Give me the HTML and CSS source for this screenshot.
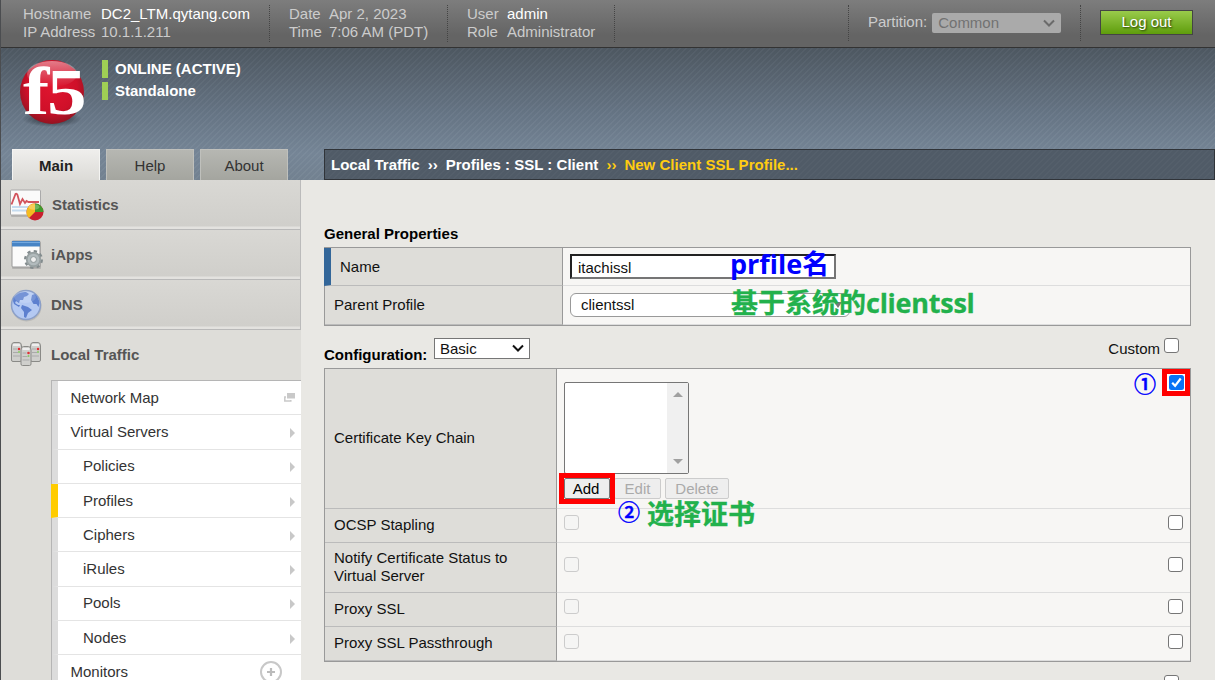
FILE: index.html
```html
<!DOCTYPE html>
<html lang="en">
<head>
<meta charset="utf-8">
<title>New Client SSL Profile</title>
<link rel="stylesheet" href="styles.css">
</head>
<body>
<div class="page">
  <div class="topbar">
    <dl class="info host"><dt>Hostname</dt><dd class="hi">DC2_LTM.qytang.com</dd><dt>IP Address</dt><dd>10.1.1.211</dd></dl>
    <dl class="info date"><dt>Date</dt><dd>Apr 2, 2023</dd><dt>Time</dt><dd>7:06 AM (PDT)</dd></dl>
    <dl class="info user"><dt>User</dt><dd class="hi">admin</dd><dt>Role</dt><dd>Administrator</dd></dl>
    <div class="partition"><span>Partition:</span>
      <span class="part-select">Common<svg width="14" height="9" viewBox="0 0 14 9"><path d="M2 1.500l5 5 5-5" fill="none" stroke="#6b6b6b" stroke-width="2"/></svg></span>
    </div>
    <div class="logout-box"><span class="logout">Log out</span></div>
  </div>

  <header class="header">
    <div class="brand">
      <svg class="logo" width="72" height="72" viewBox="0 0 72 72">
        <defs>
          <radialGradient id="ball" cx="50%" cy="42%" r="60%"><stop offset="0" stop-color="#e0152f"/><stop offset=".65" stop-color="#cf1029"/><stop offset="1" stop-color="#8d1420"/></radialGradient>
          <linearGradient id="gloss" x1="0" y1="0" x2="0" y2="1"><stop offset="0" stop-color="#fff" stop-opacity=".45"/><stop offset="1" stop-color="#fff" stop-opacity="0"/></linearGradient>
          <radialGradient id="shade"><stop offset="0" stop-color="#1c2228" stop-opacity=".9"/><stop offset="1" stop-color="#1c2228" stop-opacity="0"/></radialGradient>
        </defs>
        <ellipse cx="36" cy="60" rx="30" ry="8" fill="url(#shade)"/>
        <circle cx="36" cy="33" r="32" fill="url(#ball)"/>
        <ellipse cx="36" cy="15" rx="25" ry="13" fill="url(#gloss)"/>
        <text class="logo-f" transform="translate(7 55) scale(1.16 1)">f</text>
        <text class="logo-5" transform="translate(31 55) scale(1.22 1)">5</text>
      </svg>
      <div class="status"><div>ONLINE (ACTIVE)</div><div class="alone">Standalone</div></div>
    </div>
    <div class="navrow">
      <nav class="tabs"><span class="tab on">Main</span><span class="tab">Help</span><span class="tab">About</span></nav>
      <div class="crumbs"><span>Local Traffic</span><i>››</i><span>Profiles : SSL : Client</span><i class="now">››</i><span class="now last">New Client SSL Profile...</span></div>
    </div>
  </header>

  <div class="body">
    <aside class="side">
      <div class="sect"><svg width="36" height="36" viewBox="0 0 36 36">
        <rect x="2" y="2" width="30" height="26" rx="1" fill="#888" opacity=".4"/>
        <rect x="1.500" y="1" width="30" height="25" rx="1" fill="#fafafa" stroke="#aaa"/>
        <path d="M3 18h27M3 21.500h27" stroke="#c4dbef" stroke-width="2"/>
        <path d="M2.500 15.500L6.500 5q1-1 2 1l2.500 9 2.500-5 2.500 4 1.500-2 2 1H30" fill="none" stroke="#d2535c" stroke-width="1.800"/>
        <circle cx="26" cy="23" r="8.500" fill="#c81f2e"/><path d="M26 23V14.500A8.500 8.500 0 0 0 20 29z" fill="#f3bd21"/><path d="M26 23V14.500A8.500 8.500 0 0 1 34.500 23z" fill="#3f9b2c"/><ellipse cx="25" cy="18" rx="5.500" ry="2.800" fill="#fff" opacity=".25"/></svg><span>Statistics</span></div>
      <div class="sect iapps"><svg width="36" height="36" viewBox="0 0 36 36">
        <rect x="3" y="3" width="29" height="27" rx="1" fill="#888" opacity=".4"/>
        <rect x="3" y="2" width="28" height="26" rx="1" fill="#fbfbfb" stroke="#999"/><path d="M3 2h28v5.500H3z" fill="#4784c5"/><path d="M3 3.500h28" stroke="#73a8df"/>
        <circle cx="24.500" cy="20.500" r="8.200" fill="none" stroke="#828b8d" stroke-width="2.600" stroke-dasharray="3.220 3.220"/><circle cx="24.500" cy="20.500" r="5" fill="none" stroke="#98a1a2" stroke-width="5.400"/><circle cx="24.500" cy="20.500" r="4.600" fill="none" stroke="#b2bbbd" stroke-width="2.500"/><circle cx="24.500" cy="20.500" r="2" fill="#eee"/></svg><span>iApps</span></div>
      <div class="sect dns"><svg width="36" height="36" viewBox="0 0 36 36">
        <circle cx="17.500" cy="17.500" r="15" fill="#777" opacity=".25"/><circle cx="17" cy="16" r="14.500" fill="#b4c9f2" stroke="#8b9fc8" stroke-width="1.500"/>
        <path d="M4.500 9Q9 2.500 17 3l3 2-2 2-3 1-1 3-3 0-1 3-3-2-1 2 3 2 2 0-1 2-5-3-1-3zM13 16l6 2 4 3-4 3-2 5-2-1v-5l-3-4zM22 11l1-5 3-1q4 4 4.500 9l-1 4-2-3-3 0z" fill="#5d80cf"/><ellipse cx="16" cy="8" rx="11" ry="6" fill="#fff" opacity=".15"/></svg><span>DNS</span></div>
      <div class="sect open"><svg width="36" height="36" viewBox="0 0 36 36">
        <defs><g id="srv"><path d="M.5 4Q.5.500 3 .5h5q2.500 0 2.500 3.500v14q0 1.500-1.500 1.500H2Q.5 19.500.5 18z" fill="#cfcfcc" stroke="#8a8a87"/><path d="M2 3h7" stroke="#eee" stroke-width="2"/><path d="M2 7h4M2 10.500h5M2 14h7" stroke="#aaa"/><circle cx="8" cy="7" r="1.300" fill="#df3135"/><circle cx="8" cy="10" r="1" fill="#86ca65"/></g></defs>
        <use href="#srv" x="2" y="3"/><use href="#srv" x="21" y="3"/><use href="#srv" x="11.500" y="7"/></svg><span>Local Traffic</span></div>
      <div class="menu">
        <div class="item top"><span>Network Map</span><svg width="11" height="9" viewBox="0 0 11 9"><path d="M3 0h8v5.500H3z" fill="#c9c9c9"/><path d="M2 4H.8v4h6V7" fill="none" stroke="#c9c9c9" stroke-width="1.500"/></svg></div>
        <div class="item top"><span>Virtual Servers</span><b></b></div>
        <div class="item"><span>Policies</span><b></b></div>
        <div class="item active"><span>Profiles</span><b></b></div>
        <div class="item"><span>Ciphers</span><b></b></div>
        <div class="item"><span>iRules</span><b></b></div>
        <div class="item"><span>Pools</span><b></b></div>
        <div class="item"><span>Nodes</span><b></b></div>
        <div class="item top"><span>Monitors</span><svg class="plus" width="24" height="24" viewBox="0 0 24 24"><circle cx="12" cy="12" r="10" fill="none" stroke="#c8c8c8" stroke-width="2"/><path d="M12 8v8M8 12h8" stroke="#bbb" stroke-width="2.200"/></svg></div>
      </div>
    </aside>

    <main class="main">
      <h2 class="title">General Properties</h2>
      <div class="table general">
        <div class="label required">Name</div>
        <div class="cell"><span class="input">itachissl</span></div>
        <div class="label">Parent Profile</div>
        <div class="cell"><span class="select round">clientssl<b class="caret"></b></span></div>
      </div>
      <div class="config">
        <h2 class="title">Configuration:</h2>
        <span class="select basic">Basic<svg width="14" height="9" viewBox="0 0 14 9"><path d="M2 1.500l5 5 5-5" fill="none" stroke="#111" stroke-width="2"/></svg></span>
        <span class="custom">Custom<b class="check"></b></span>
      </div>
      <div class="table settings">
        <div class="label">Certificate Key Chain</div>
        <div class="cell chain">
          <div class="list"><div class="scroll"><b class="up"></b><b class="down"></b></div></div>
          <div class="buttons"><span class="btn add">Add</span><span class="btn edit">Edit</span><span class="btn del">Delete</span></div>
          <span class="tick"><svg width="15" height="15" viewBox="0 0 15 15"><rect width="15" height="15" rx="2.500" fill="#0a73f5"/><path d="M3.200 7.800l2.900 3 5.600-7.300" fill="none" stroke="#fff" stroke-width="2.200"/></svg></span>
        </div>
        <div class="label">OCSP Stapling</div>
        <div class="cell pair"><b class="check off"></b><b class="check"></b></div>
        <div class="label">Notify Certificate Status to<br>Virtual Server</div>
        <div class="cell pair notify"><b class="check off"></b><b class="check"></b></div>
        <div class="label">Proxy SSL</div>
        <div class="cell pair"><b class="check off"></b><b class="check"></b></div>
        <div class="label">Proxy SSL Passthrough</div>
        <div class="cell pair"><b class="check off"></b><b class="check"></b></div>
      </div>
      <div class="next"><b class="check"></b></div>
    </main>
  </div>

  <div class="note blue n-name">prfile名</div>
  <div class="note green n-parent">基于系统的<span class="latin">clientssl</span></div>
  <div class="note blue num n-one">①</div>
  <div class="note blue num n-two">②</div>
  <div class="note green n-cert">选择证书</div>
</div>
</body>
</html>
```
FILE: styles.css
```css
* { box-sizing: border-box; }
body { margin: 0; background: #e9e8e4; font: 15px/18px "Liberation Sans", Arial, sans-serif; color: #111; }
.page { position: relative; width: 1215px; height: 680px; overflow: hidden; border-left: 1px solid #4b4d50; }

/* Top information bar */
.topbar { display: flex; height: 48px; background: linear-gradient(#7d7d7d, #646464 75%); border-bottom: 1px solid #333; color: #ccc; }
.info { display: grid; align-content: start; margin: 5px 0; height: 37px; border-right: 1px dotted #444; grid-auto-rows: 18px; white-space: nowrap; }
.info dt, .info dd { margin: 0; }
.host { width: 269px; padding-left: 22px; grid-template-columns: 78px 1fr; }
.date { width: 178px; padding-left: 19px; grid-template-columns: 40px 1fr; }
.user { width: 167px; padding-left: 19px; grid-template-columns: 40px 1fr; }
.hi { color: #fff; }
.partition { display: flex; align-items: flex-start; gap: 5px; margin: 5px 0 0 233px; height: 36px; width: 233px; padding: 8px 0 0 19px; border-left: 1px dotted #444; border-right: 1px dotted #444; }
.part-select { display: flex; align-items: center; justify-content: space-between; width: 129px; height: 20px; padding: 0 5px 0 6px; border-radius: 2px; background: #aaa; color: #727272; }
.logout-box { padding: 10px 0 0 19px; }
.logout { display: block; width: 93px; height: 25px; border: 1px solid #444; background: linear-gradient(#99cb4b, #5f9d0c); color: #fff; text-align: center; line-height: 22px; text-shadow: 1px 1px 2px #263c06; }

/* Brand area and tabs */
.header { height: 132px; display: flex; flex-direction: column; justify-content: space-between; background: repeating-linear-gradient(135deg, rgba(255,255,255,.03) 0 2px, rgba(0,0,0,.015) 2px 4.243px), linear-gradient(#4e5862, #677686 50%, #778798 80%, #748392); }
.brand { display: flex; padding: 11px 0 0 15px; }
.logo { display: block; overflow: visible; }
.logo-f, .logo-5 { font-family: "Liberation Serif", serif; font-weight: bold; fill: #fff; }
.logo-f { font-size: 68px; }
.logo-5 { font-size: 65px; }
.status { display: grid; gap: 4px; align-content: start; margin: 1px 0 0 14px; color: #fff; font-weight: bold; }
.status div { border-left: 6px solid #9fcf55; padding-left: 7px; }
.navrow { display: flex; height: 31px; }
.tabs { display: flex; gap: 6px; padding-left: 11px; width: 323px; }
.tab { width: 88px; height: 31px; line-height: 31px; text-align: center; color: #333; background: linear-gradient(#b6b7b2, #a4a59f); border: solid #bfc0bc; border-width: 1px 1px 0; }
.tab.on { background: linear-gradient(#efeeec, #dcdbd7); border-color: #f4f4f2; font-weight: bold; color: #222; }
.crumbs { flex: 1; display: flex; align-items: center; padding-left: 6px; border: 1px solid #303439; background: repeating-linear-gradient(135deg, rgba(255,255,255,.025) 0 2px, transparent 2px 4.243px), #505b67; color: #fff; font-weight: bold; white-space: pre; letter-spacing: .02px; }
.crumbs i { font-style: normal; margin: 0 8px; }
.crumbs .now { color: #fc1; }

/* Sidebar */
.body { display: flex; height: 500px; }
.side { width: 300px; background: #deddd9; flex: none; }
.sect { display: flex; align-items: center; height: 50px; padding: 0 0 0 8px; gap: 7px; font-weight: bold; color: #555; border-right: 1px solid #bbb; border-bottom: 1px solid #b9b9b9; background: linear-gradient(#d9d8d4, #d0cfcb 46px, #e3e2df 47px); }
.sect svg { margin-top: 4px; }
.sect.iapps, .sect.dns, .sect.open { gap: 6px; }
.sect.open { background: none; border-color: transparent; }
.menu { margin-left: 50px; border-top: 1px solid #b5b5b5; border-left: 1px solid #b5b5b5; background: #fff; }
.item { display: flex; align-items: center; justify-content: space-between; height: 34.3px; padding: 0 6px 0 25px; border-left: 6px solid #dcdcdc; border-bottom: 1px solid #e4e4e4; color: #333; }
.item.top { padding-left: 12.500px; }
.item.active { margin-left: -1px; border-left: 7px solid #fc0; }
.item b { border: 5px solid transparent; border-left-color: #c8c8c8; border-right: 0; margin-top: 2px; }
.item .plus { margin-right: 12px; }

/* Content */
.main { flex: 1; padding: 45px 24px 0 23px; }
.title { margin: 0; font-size: 15px; line-height: 18px; font-weight: bold; color: #000; }
.table { display: grid; background: #f7f6f4; border: 1px solid #999; }
.label { display: flex; align-items: center; padding-left: 9px; background: #deddd9; border-right: 1px solid #999; border-bottom: 1px solid #bbb; }
.cell { display: flex; align-items: center; border-bottom: 1px solid #ddd; padding-left: 7px; }
.general { margin-top: 4px; height: 79px; grid-template-columns: 238px 1fr; grid-template-rows: 38px 39px; }
.label.required { border-left: 7px solid #369; margin-left: -1px; padding-left: 9px; }
.input { width: 266px; height: 25px; border: 2px solid #757575; border-top-color: #222; border-left-color: #222; background: #fff; padding-left: 6px; line-height: 23px; }
.select { display: flex; align-items: center; justify-content: space-between; background: #fff; border: 1px solid #767676; }
.round { width: 280px; height: 24px; border-radius: 6px; border-color: #999; padding: 0 7px 0 10px; }
.caret { border: 4px solid transparent; border-top: 6px solid #777; border-bottom: 0; }
.config { display: flex; height: 42px; padding-top: 12px; }
.config .title { margin-top: 8px; width: 110px; }
.basic { width: 96px; height: 21px; padding: 0 4px 0 5px; }
.custom { display: flex; margin: 2px 12px 0 auto; gap: 4px; }
.check { display: block; flex: none; width: 15px; height: 15px; border: 1.500px solid #767676; border-radius: 3px; background: #fff; }
.custom .check { margin-top: -2px; }
.check.off { border-color: #ccc; background: #f5f5f4; }
.settings { height: 294px; grid-template-columns: 232px 1fr; grid-template-rows: 140px 34px 50px 34px 34px; }
.settings .label { padding-bottom: 2px; }
.cell.pair { justify-content: space-between; align-items: flex-start; padding: 6px 7px 0; }
.cell.notify { padding-top: 14px; }
.cell.pair:last-child { padding-top: 7px; }
.cell.chain { display: block; position: relative; padding-top: 13px; }
.list { width: 125px; height: 92px; border: 1px solid #767676; border-radius: 2px; background: #fff; display: flex; justify-content: flex-end; }
.scroll { width: 21px; background: #f0f0f0; display: flex; flex-direction: column; align-items: center; justify-content: space-between; padding: 9px 0; }
.up, .down { border: 5px solid transparent; }
.up { border-bottom-color: #a0a0a0; border-top: 0; }
.down { border-top-color: #a0a0a0; border-bottom: 0; }
.buttons { display: flex; margin-top: 4px; }
.btn { height: 21px; line-height: 19px; text-align: center; border: 1px solid #ccc; border-radius: 2px; background: #eee; color: #aaa; }
.add { position: relative; width: 46px; color: #000; border-color: #767676; padding-right: 2px; z-index: 1; }
.add::after { content: ""; position: absolute; inset: -6px; border: 5px solid #f00; }
.edit { width: 47px; margin-left: 4px; }
.del { width: 64px; margin-left: 4px; }
.tick { position: absolute; right: 0; top: 0; width: 28px; height: 27px; border: 5px solid #f00; background: #fff; display: flex; align-items: center; justify-content: center; }
.next { display: flex; justify-content: flex-end; padding: 13px 12px 0 0; }

/* Annotations over the form */
.note { position: absolute; font: bold 27px/36px "Open Sans", "Noto Sans CJK SC", sans-serif; white-space: nowrap; }
.blue { color: #00f; }
.green { color: #22b14c; -webkit-text-stroke: .3px #22b14c; }
.latin { letter-spacing: -.25px; }
.n-name { left: 729px; top: 246px; }
.n-parent { left: 730px; top: 285px; }
.n-cert { left: 646px; top: 496px; }
.num { font: 500 22px/28px "Noto Sans CJK SC", sans-serif; -webkit-text-stroke: .5px #00f; }
.n-one { left: 1133px; top: 368px; }
.n-two { left: 617px; top: 496px; }
```
